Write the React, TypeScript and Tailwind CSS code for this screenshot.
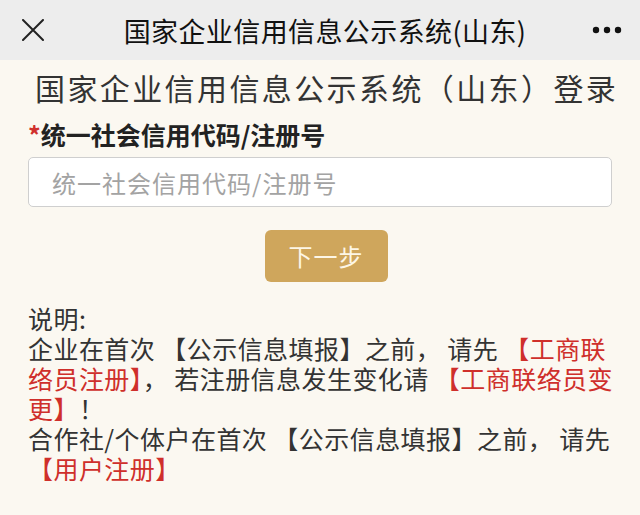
import React from "react";

const font = { fontFamily: '"Noto Sans CJK SC", "Noto Sans", sans-serif' };

function Red({ children }: { children: React.ReactNode }) {
  return <span className="text-[#cf2f2b]">{children}</span>;
}

export default function App() {
  return (
    <div
      className="min-h-[515px] w-full bg-[#fbf8f1] text-[#333]"
      style={font}>
      {/* top bar */}
      <header className="flex h-[60px] items-center justify-between bg-[#ededed] pl-[22px] pr-[18px]">
        <svg width="22" height="22" viewBox="0 0 22 22" className="text-[#222]">
          <path
            d="M1 1 L21 21 M21 1 L1 21"
            stroke="currentColor"
            strokeWidth="2"
            strokeLinecap="round"
          />
        </svg>
        <h1 className="ml-[14px] text-[27px] leading-none tracking-[0.4px] text-[#111]">
          国家企业信用信息公示系统(山东)
        </h1>
        <svg width="30" height="8" viewBox="0 0 30 8" className="text-[#111]">
          <circle cx="4" cy="4" r="3.2" fill="currentColor" />
          <circle cx="15" cy="4" r="3.2" fill="currentColor" />
          <circle cx="26" cy="4" r="3.2" fill="currentColor" />
        </svg>
      </header>

      <main className="px-[28px]">
        <h2 className="mt-[4px] whitespace-nowrap pl-[7px] text-[30px] leading-[46px] tracking-[2.4px] text-[#333]">
          国家企业信用信息公示系统（山东）登录
        </h2>

        <label className="mt-[7px] block text-[25px] font-bold leading-[34px] text-[#222]">
          <span className="text-[#d0312d]">*</span>统一社会信用代码/注册号
        </label>

        <input
          type="text"
          placeholder="统一社会信用代码/注册号"
          className="mt-[6px] block h-[50px] w-full rounded-[5px] border border-[#cfcfcf] bg-white px-[23px] text-[24px] tracking-[1px] text-[#333] outline-none placeholder:text-[#a3a3a3]"
        />

        <div className="mt-[23px] flex justify-center pl-[12px]">
          <button
            type="button"
            className="h-[52px] w-[123px] rounded-[6px] bg-[#cfa65c] text-[24px] tracking-[1px] text-[#fdf6e6]">
            下一步
          </button>
        </div>

        <p className="mt-[21px] whitespace-nowrap text-[25px] leading-[30px] tracking-[0.45px] text-[#333]">
          说明:
          <br />
          企业在首次 【公示信息填报】之前， 请先 <Red>【工商联</Red>
          <br />
          <Red>络员注册】</Red>， 若注册信息发生变化请 <Red>【工商联络员变</Red>
          <br />
          <Red>更】</Red>！
          <br />
          合作社/个体户在首次 【公示信息填报】之前， 请先
          <br />
          <Red>【用户注册】</Red>
        </p>
      </main>
    </div>
  );
}
